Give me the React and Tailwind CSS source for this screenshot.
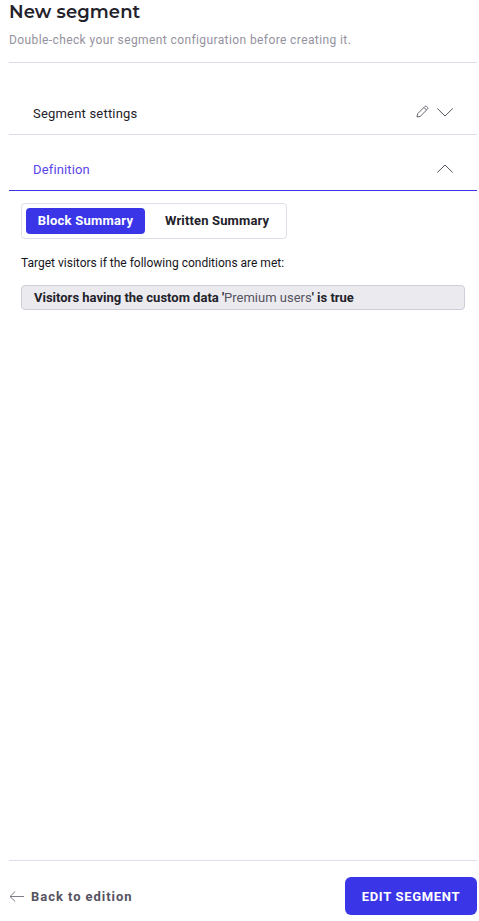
import React, { useState } from "react";

const Chevron = ({ up }) => (
  <svg width="16" height="9" viewBox="0 0 16 9" fill="none" stroke="#55535f" strokeWidth="1">
    <path d={up ? "M0.3 8.5L8 1L15.7 8.5" : "M0.3 0.5L8 8L15.7 0.5"} />
  </svg>
);

const Pencil = () => (
  <svg className="-mt-[3px]" width="13" height="13" viewBox="0 0 13 13" fill="none" stroke="#55535f" strokeWidth="0.9">
    <path d="M1 12L1.6 8.8L8.9 1.5C9.4 1 10.1 1 10.6 1.5L11.5 2.4C12 2.9 12 3.6 11.5 4.1L4.2 11.4L1 12Z" />
    <path d="M8 2.5L10.5 5" />
  </svg>
);

const BackArrow = () => (
  <svg width="15" height="11" viewBox="0 0 15 11" fill="none" stroke="#6f6d78" strokeWidth="0.9">
    <path d="M15 5.5H1M6.2 0.5L1 5.5L6.2 10.5" />
  </svg>
);

const App = () => {
  const [tab] = useState("block");

  return (
    <div className="h-[921px] w-[479px] flex flex-col bg-white pl-[9px] pr-[2px] font-['Roboto',sans-serif]">
      <div className="border-b border-[#dfdee8] h-[63px]">
        <h1 className="font-['Montserrat','Inter',sans-serif] font-semibold text-[18px] leading-[24px] tracking-[0.1px] text-[#23222b]">
          New segment
        </h1>
        <p className="mt-[7px] text-[12px] leading-[18px] tracking-[0.4px] text-[#94929e]">
          Double-check your segment configuration before creating it.
        </p>
      </div>

      <div className="mt-[28px] h-[44px] flex items-center justify-between border-b border-[#dfdee8] pl-[24px] pr-[24px]">
        <span className="pt-[2px] text-[13px] tracking-[0.2px] text-[#23222b]">Segment settings</span>
        <div className="flex items-center gap-[8px]">
          <Pencil />
          <Chevron />
        </div>
      </div>

      <div className="mt-[12px] h-[44px] flex items-center justify-between border-b border-[#3a36e8] pl-[24px] pr-[24px]">
        <span className="pt-[2px] text-[13px] tracking-[0.15px] text-[#5a45e8]">Definition</span>
        <Chevron up />
      </div>

      <div className="pl-[12px] pr-[12px]">
        <div className="mt-[12px] w-[266px] h-[36px] flex items-center p-[4px] rounded-[4px] border border-[#dfdee8]">
          <button className={`h-[26px] w-[119px] rounded-[4px] text-[13px] font-bold tracking-[0.25px] ${tab === "block" ? "bg-[#3a36e8] text-white" : ""}`}>
            Block Summary
          </button>
          <button className="h-[26px] ml-[20px] text-[13px] font-bold tracking-[0.15px] text-[#23222b]">Written Summary</button>
        </div>
        <p className="mt-[15px] text-[12px] leading-[18px] text-[#16151c]">
          Target visitors if the following conditions are met:
        </p>
        <div className="mt-[13px] h-[25px] flex items-center rounded-[4px] border border-[#cfced8] bg-[#eaeaef] pl-[12px] text-[13px] font-bold text-[#23222b]">
          <span>
            Visitors having the custom data '<span className="font-normal text-[#55535f]">Premium users</span>' is true
          </span>
        </div>
      </div>

      <div className="mt-auto h-[55px] border-t border-[#dfdee8] flex items-end justify-between">
        <button className="h-[38px] flex items-center gap-[7px] text-[13px] font-bold tracking-[0.95px] text-[#55535f]">
          <BackArrow />
          <span className="pt-[2px]">Back to edition</span>
        </button>
        <button className="h-[38px] w-[132px] pt-[1px] rounded-[6px] bg-[#3a36e8] text-white text-[13px] font-bold tracking-[0.7px]">
          EDIT SEGMENT
        </button>
      </div>
      <div className="h-[6px] shrink-0" />
    </div>
  );
};

export default App;
